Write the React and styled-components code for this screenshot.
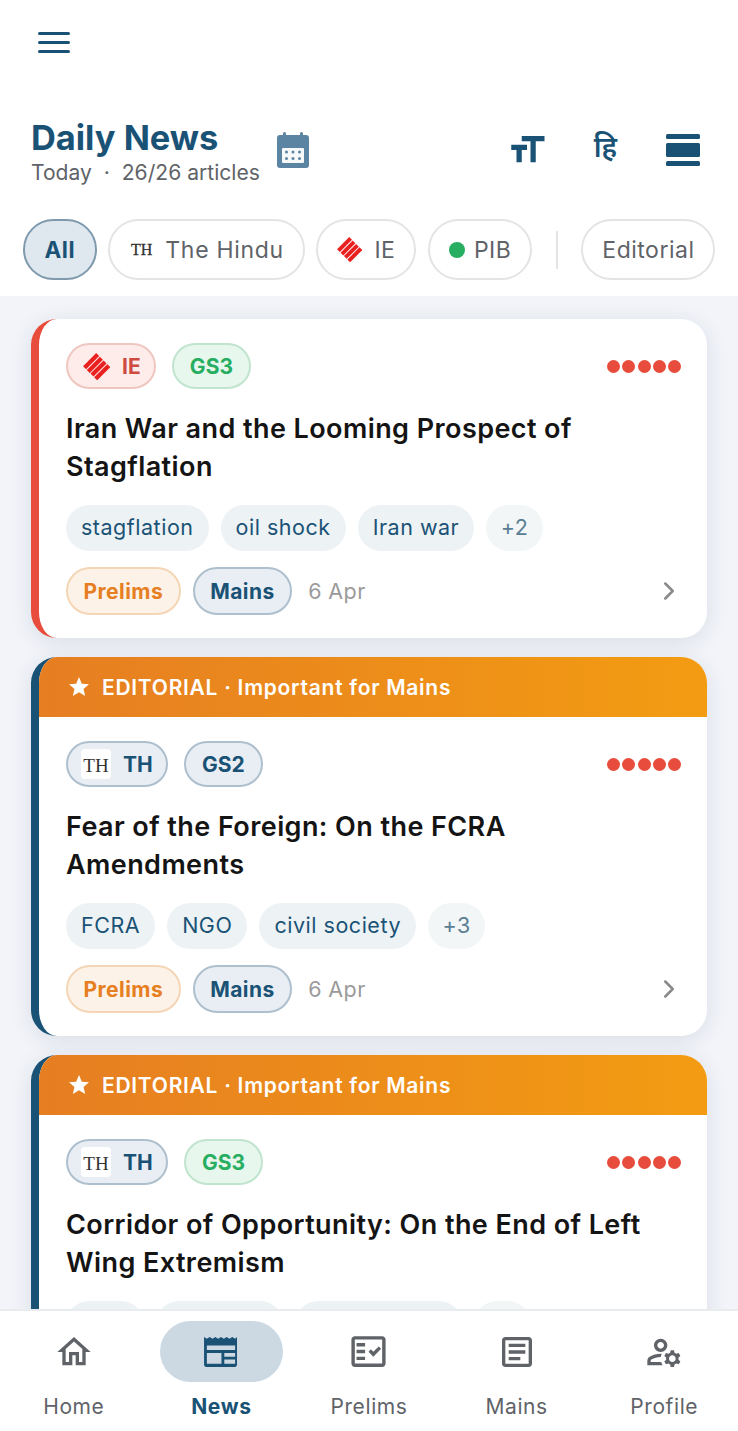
import React from 'react'
import styled, { createGlobalStyle } from 'styled-components'
import { ChevronRight } from 'lucide-react'
import { MdStar, MdOutlineHome, MdOutlineFactCheck, MdOutlineArticle, MdOutlineManageAccounts, MdFormatSize } from 'react-icons/md'

const navy = '#1a5276'
const grey = '#5f6368'

const GlobalStyle = createGlobalStyle`
  html, body { margin: 0; padding: 0; }
  body { font-family: Inter, "Noto Sans", "Liberation Sans", sans-serif; background: #fff; }
  * { box-sizing: border-box; }
`

const Screen = styled.div`
  width: 738px;
  height: 1431px;
  display: flex;
  flex-direction: column;
  overflow: hidden;
  background: #f2f4f9;
`

const Header = styled.header`
  flex: none;
  height: 296px;
  background: #fff;
  display: flex;
  flex-direction: column;
`

const MenuRow = styled.div`
  height: 112px;
  padding: 24px 0 0 34px;
  color: ${navy};
`

const TitleRow = styled.div`
  display: flex;
  align-items: center;
  height: 76px;
  padding: 0 38px 0 31px;
`

const TitleBlock = styled.div`
  margin: 5px 17px 0 0;
`

const Title = styled.h1`
  margin: 0;
  font-size: 34.4px;
  line-height: 41px;
  font-weight: 700;
  color: ${navy};
`

const Subtitle = styled.div`
  font-size: 21.1px;
  line-height: 30px;
  color: ${grey};
  white-space: pre;
`

const Actions = styled.div`
  margin-left: auto;
  display: flex;
  align-items: center;
  gap: 48px;
  color: ${navy};
`

const HindiToggle = styled.span`
  font-family: "Noto Sans Devanagari", "Noto Sans", "Lohit Devanagari", sans-serif;
  font-size: 28px;
  line-height: 34px;
  font-weight: 600;
  margin-left: -2px;
  margin-right: 1px;
  color: ${navy};
`

const FilterRow = styled.div`
  display: flex;
  align-items: center;
  gap: 11.5px;
  margin: 31px 23px 0;
  overflow: hidden;
`

const FilterChip = styled.div`
  flex: none;
  height: 61px;
  padding: 0 ${p => (p.$active ? 19.5 : 19)}px;
  display: flex;
  align-items: center;
  gap: ${p => p.$gap || 12}px;
  border-radius: 31px;
  border: 2px solid ${p => (p.$active ? '#7f9aad' : '#e2e4e6')};
  background: ${p => (p.$active ? '#e0e8ef' : '#fff')};
  color: ${p => (p.$active ? navy : grey)};
  font-size: ${p => (p.$active ? 22.5 : 23)}px;
  font-weight: ${p => (p.$active ? 700 : 400)};
  letter-spacing: 0.5px;
`

const HinduLabel = styled.span`
  letter-spacing: 0.7px;
`

const FilterDivider = styled.div`
  flex: none;
  width: 2px;
  height: 38px;
  margin: 0 12px;
  background: #e2e4e6;
`

const GreenDot = styled.span`
  width: 16px;
  height: 16px;
  border-radius: 50%;
  background: #27ae60;
`

const SerifMark = styled.span`
  margin-left: 2px;
  font-family: "Liberation Serif", serif;
  font-size: 16px;
  font-weight: 400;
  letter-spacing: 0;
  color: #333;
  -webkit-text-stroke: 0.3px #333;
`

const Feed = styled.main`
  flex: 1;
  min-height: 0;
  overflow: hidden;
  padding: 23px 31px 0;
  display: flex;
  flex-direction: column;
  gap: 19px;
`

const Card = styled.article`
  flex: none;
  background: #fff;
  border-radius: 26px;
  border-left: 8px solid ${p => p.$accent};
  box-shadow: 0 4px 22px rgba(30, 50, 70, 0.11);
  overflow: hidden;
`

const EditorialBanner = styled.div`
  height: 60px;
  padding-left: 28px;
  display: flex;
  align-items: center;
  gap: 11px;
  background: linear-gradient(90deg, #e67e22, #f39c12);
  color: #fff;
  font-size: 21px;
  font-weight: 600;
  letter-spacing: 0.72px;
`

const CardBody = styled.div`
  padding: 24px 26px 23px 27px;
`

const BadgeRow = styled.div`
  display: flex;
  align-items: center;
  gap: 16px;
`

const tones = {
  red: { bg: '#fdecea', line: '#efc6c0', text: '#cf4a3f' },
  green: { bg: '#e8f7ee', line: '#c0e4ce', text: '#27ae60' },
  navy: { bg: '#e8eef3', line: '#aebfcd', text: navy },
  orange: { bg: '#fdf2e7', line: '#f4d6b6', text: '#e67e22' }
}

const Badge = styled.span`
  flex: none;
  height: 46px;
  padding: 0 16px;
  display: inline-flex;
  align-items: center;
  border-radius: 24px;
  border: 2px solid ${p => tones[p.$tone].line};
  background: ${p => tones[p.$tone].bg};
  color: ${p => tones[p.$tone].text};
  font-size: 21px;
  font-weight: 700;
  letter-spacing: 0.1px;
`

const SourceBadge = styled(Badge)`
  padding: 0 13px 0 15px;
  gap: 12px;
`

const MetaBadge = styled(Badge)`
  height: 48px;
  padding: 0 15.5px;
  letter-spacing: 0.45px;
`

const LogoBox = styled.span`
  width: 30px;
  height: 30px;
  margin-left: -2px;
  padding-top: 3px;
  display: flex;
  align-items: center;
  justify-content: center;
  border-radius: 4px;
  background: #fff;
  font-family: "Liberation Serif", serif;
  font-size: 19px;
  font-weight: 400;
  letter-spacing: 0;
  color: #333;
`

const Importance = styled.div`
  margin-left: auto;
  display: flex;
  gap: 2.25px;
`

const Dot = styled.span`
  width: 13px;
  height: 13px;
  border-radius: 50%;
  background: #e74c3c;
`

const CardTitle = styled.h2`
  margin: 21px 0 19px;
  font-size: 27px;
  line-height: 38px;
  font-weight: 600;
  letter-spacing: 0.42px;
  color: #141414;
`

const TagRow = styled.div`
  display: flex;
  gap: 12px;
`

const Tag = styled.span`
  flex: none;
  height: 46px;
  padding: 0 ${p => (p.$more ? 14.5 : 15)}px 2px;
  display: flex;
  align-items: center;
  border-radius: 23px;
  background: ${p => (p.$more ? '#f2f6f7' : '#edf2f5')};
  color: ${p => (p.$more ? '#5a7d93' : navy)};
  font-size: 21.5px;
  letter-spacing: 0.52px;
`

const MetaRow = styled.div`
  display: flex;
  align-items: center;
  gap: 12px;
  margin-top: 16px;
`

const DateText = styled.span`
  margin-left: 4px;
  font-size: 21.5px;
  letter-spacing: 0.4px;
  color: #9a9a9a;
`

const Chevron = styled(ChevronRight)`
  margin-left: auto;
  margin-right: -3px;
`

const BottomNav = styled.nav`
  flex: none;
  height: 122px;
  display: grid;
  grid-template-columns: repeat(5, 1fr);
  background: #fff;
  border-top: 2px solid #e9ecef;
`

const NavItem = styled.div`
  display: flex;
  flex-direction: column;
  align-items: center;
  padding-top: 10px;
  color: ${p => (p.$active ? navy : grey)};
  font-size: 21px;
  font-weight: ${p => (p.$active ? 700 : 400)};
  letter-spacing: 0.6px;
`

const IconPill = styled.div`
  width: 123px;
  height: 61px;
  display: flex;
  align-items: center;
  justify-content: center;
  border-radius: 31px;
  background: ${p => (p.$active ? '#ccd9e3' : 'transparent')};
  margin-bottom: 12px;
`

const MenuIcon = () => (
  <svg width="40" height="36" viewBox="0 0 40 36" fill="none" stroke="currentColor" strokeWidth="3" strokeLinecap="round">
    <path d="M5.500 9.500h29M5.500 18.500h29M5.500 27.500h29" />
  </svg>
)

const CalendarIcon = () => (
  <svg width="32" height="36" viewBox="0 0 32 36">
    <path fill="#5b84a3" d="M6 1.500a1.500 1.500 0 0 1 3 0V3h14V1.500a1.500 1.500 0 0 1 3 0V3h3a3 3 0 0 1 3 3v27a3 3 0 0 1-3 3H3a3 3 0 0 1-3-3V6a3 3 0 0 1 3-3h3z" />
    <rect x="5" y="16" width="22" height="15" rx="1" fill="#f6f8fa" />
    {[9.5, 16, 22.5].map(x => [20, 26.5].map(y => <circle key={x + '-' + y} cx={x} cy={y} r="1.500" fill="#5b84a3" />))}
  </svg>
)

const ViewIcon = () => (
  <svg width="34" height="32" viewBox="0 0 34 32" fill="currentColor">
    <rect x="0" y="0" width="34" height="5" rx="1.5" />
    <rect x="0" y="9" width="34" height="14" rx="1.5" />
    <rect x="0" y="27" width="34" height="5" rx="1.5" />
  </svg>
)

// diamond made of four bars, rotated so the bars run up to the right
const IeLogo = ({ size = 27 }) => (
  <svg width={size} height={size} viewBox="0 0 32 32" fill="#e8201f">
    <g transform="rotate(-45 16 16)">
      <rect x="5" y="4.500" width="22" height="5" />
      <rect x="5" y="10.700" width="22" height="5" />
      <rect x="5" y="16.900" width="22" height="5" />
      <rect x="5" y="23.100" width="22" height="5" />
    </g>
  </svg>
)

const NewsIcon = () => (
  <svg width="36" height="32" viewBox="0 0 38 34" fill={navy}>
    <path fillRule="evenodd" d="M1 1l3 2 3-2 3 2 3-2 3 2 3-2 3 2 3-2 3 2 3-2 3 2 2-2v29a3 3 0 0 1-3 3H4a3 3 0 0 1-3-3zM4 10v5h30v-5zM4 18v11.500h15.500V18zM22.500 18v4h11.500v-4zM22.500 25v4.500h11.500V25z" />
  </svg>
)

const cards = [
  {
    accent: '#e74c3c',
    source: 'IE',
    gs: 'GS3',
    title: 'Iran War and the Looming Prospect of Stagflation',
    tags: ['stagflation', 'oil shock', 'Iran war'],
    more: '+2'
  },
  {
    accent: navy,
    editorial: true,
    source: 'TH',
    gs: 'GS2',
    title: 'Fear of the Foreign: On the FCRA Amendments',
    tags: ['FCRA', 'NGO', 'civil society'],
    more: '+3'
  },
  {
    accent: navy,
    editorial: true,
    source: 'TH',
    gs: 'GS3',
    title: 'Corridor of Opportunity: On the End of Left Wing Extremism',
    tags: ['LWE', 'Naxalism', 'development'],
    more: '+2'
  }
]

const navItems = [
  { label: 'Home', icon: <MdOutlineHome size={40} /> },
  { label: 'News', icon: <NewsIcon />, active: true },
  { label: 'Prelims', icon: <MdOutlineFactCheck size={41} /> },
  { label: 'Mains', icon: <MdOutlineArticle size={40} /> },
  { label: 'Profile', icon: <MdOutlineManageAccounts size={40} /> }
]

const NewsCard = ({ card }) => (
  <Card $accent={card.accent}>
    {card.editorial && (
      <EditorialBanner>
        <MdStar size={24} />
        EDITORIAL · Important for Mains
      </EditorialBanner>
    )}
    <CardBody>
      <BadgeRow>
        <SourceBadge $tone={card.source === 'IE' ? 'red' : 'navy'}>
          {card.source === 'IE' ? <IeLogo /> : <LogoBox>TH</LogoBox>}
          {card.source}
        </SourceBadge>
        <Badge $tone={card.gs === 'GS3' ? 'green' : 'navy'}>{card.gs}</Badge>
        <Importance>
          {[0, 1, 2, 3, 4].map(i => <Dot key={i} />)}
        </Importance>
      </BadgeRow>
      <CardTitle>{card.title}</CardTitle>
      <TagRow>
        {card.tags.map(tag => <Tag key={tag}>{tag}</Tag>)}
        <Tag $more>{card.more}</Tag>
      </TagRow>
      <MetaRow>
        <MetaBadge $tone="orange">Prelims</MetaBadge>
        <MetaBadge $tone="navy">Mains</MetaBadge>
        <DateText>6 Apr</DateText>
        <Chevron size={30} strokeWidth={2} color="#8a8a8a" />
      </MetaRow>
    </CardBody>
  </Card>
)

const App = () => (
  <Screen>
    <GlobalStyle />
    <Header>
      <MenuRow>
        <MenuIcon />
      </MenuRow>
      <TitleRow>
        <TitleBlock>
          <Title>Daily News</Title>
          <Subtitle>Today  ·  26/26 articles</Subtitle>
        </TitleBlock>
        <CalendarIcon />
        <Actions>
          <MdFormatSize size={42} />
          <HindiToggle>हि</HindiToggle>
          <ViewIcon />
        </Actions>
      </TitleRow>
      <FilterRow>
        <FilterChip $active>All</FilterChip>
        <FilterChip $gap={13}><SerifMark>TH</SerifMark><HinduLabel>The Hindu</HinduLabel></FilterChip>
        <FilterChip><IeLogo size={25} />IE</FilterChip>
        <FilterChip $gap={9}><GreenDot />PIB</FilterChip>
        <FilterDivider />
        <FilterChip>Editorial</FilterChip>
      </FilterRow>
    </Header>
    <Feed>
      {cards.map(card => <NewsCard key={card.title} card={card} />)}
    </Feed>
    <BottomNav>
      {navItems.map(item => (
        <NavItem key={item.label} $active={item.active}>
          <IconPill $active={item.active}>{item.icon}</IconPill>
          {item.label}
        </NavItem>
      ))}
    </BottomNav>
  </Screen>
)

export default App
